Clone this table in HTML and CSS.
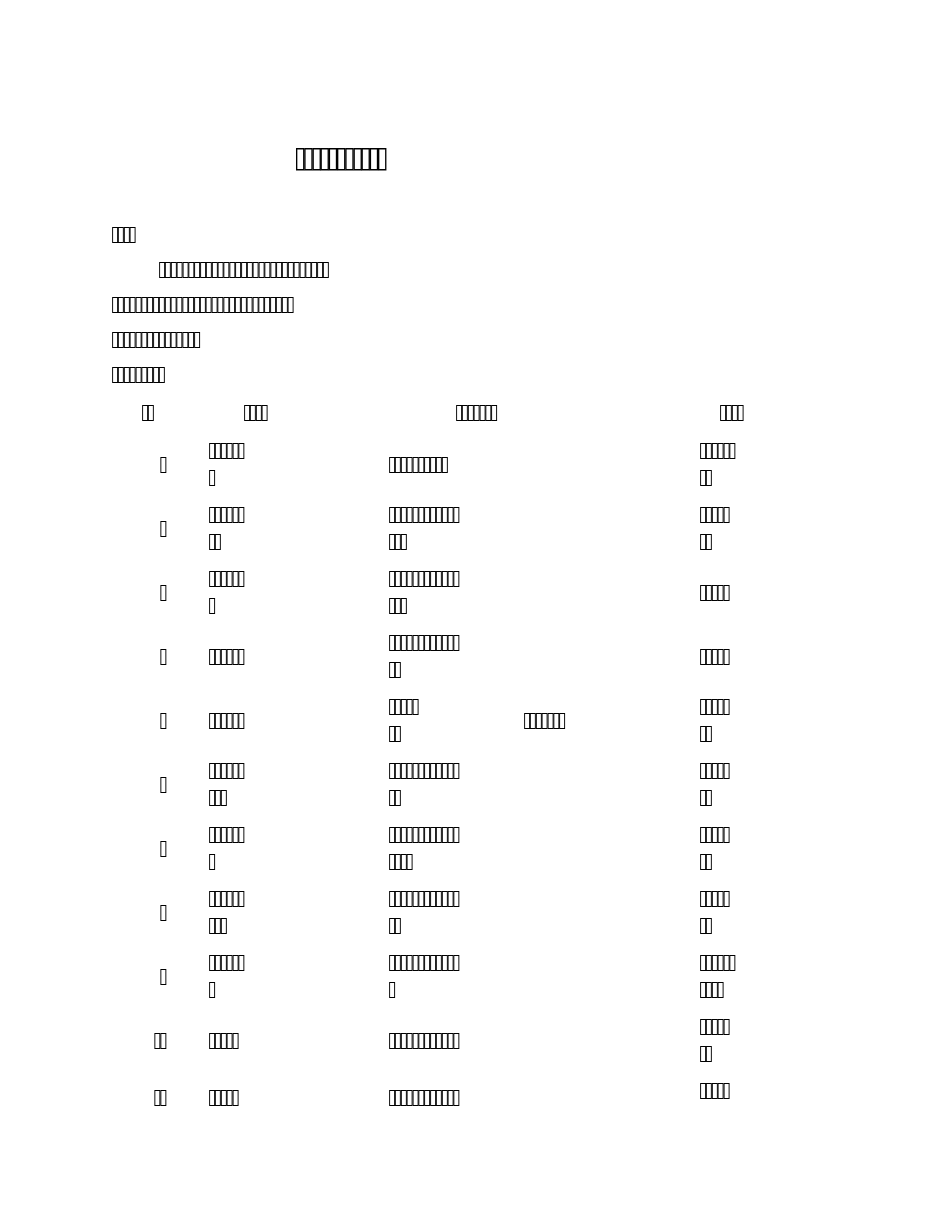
FILE: index.html
```html
<!DOCTYPE html>
<html>
<head>
<meta charset="utf-8">
<title>⌷⌷⌷⌷⌷⌷⌷⌷⌷⌷⌷</title>
<link rel="stylesheet" href="styles.css">
</head>
<body>
<div class="page">
  <h1 class="title">⌷⌷⌷⌷⌷⌷⌷⌷⌷⌷⌷</h1>
  <div class="intro">
    <p class="line">⌷⌷⌷⌷</p>
    <p class="line indent">⌷⌷⌷⌷⌷⌷⌷⌷⌷⌷⌷⌷⌷⌷⌷⌷⌷⌷⌷⌷⌷⌷⌷⌷⌷⌷⌷⌷⌷</p>
    <p class="line">⌷⌷⌷⌷⌷⌷⌷⌷⌷⌷⌷⌷⌷⌷⌷⌷⌷⌷⌷⌷⌷⌷⌷⌷⌷⌷⌷⌷⌷⌷⌷</p>
    <p class="line">⌷⌷⌷⌷⌷⌷⌷⌷⌷⌷⌷⌷⌷⌷⌷</p>
    <p class="line">⌷⌷⌷⌷⌷⌷⌷⌷⌷</p>
  </div>
  <div class="table">
    <div class="thead">
      <div class="th th-no">⌷⌷</div>
      <div class="th">⌷⌷⌷⌷</div>
      <div class="th">⌷⌷⌷⌷⌷⌷⌷</div>
      <div class="th">⌷⌷⌷⌷</div>
    </div>

    <div class="row">
      <div class="no">⌷</div>
      <div class="cell">⌷⌷⌷⌷⌷⌷<br>⌷</div>
      <div class="cell">⌷⌷⌷⌷⌷⌷⌷⌷⌷⌷</div>
      <div class="cell"></div>
      <div class="cell">⌷⌷⌷⌷⌷⌷<br>⌷⌷</div>
    </div>
    <div class="row">
      <div class="no">⌷</div>
      <div class="cell">⌷⌷⌷⌷⌷⌷<br>⌷⌷</div>
      <div class="cell">⌷⌷⌷⌷⌷⌷⌷⌷⌷⌷⌷⌷<br>⌷⌷⌷</div>
      <div class="cell"></div>
      <div class="cell">⌷⌷⌷⌷⌷<br>⌷⌷</div>
    </div>
    <div class="row">
      <div class="no">⌷</div>
      <div class="cell">⌷⌷⌷⌷⌷⌷<br>⌷</div>
      <div class="cell">⌷⌷⌷⌷⌷⌷⌷⌷⌷⌷⌷⌷<br>⌷⌷⌷</div>
      <div class="cell"></div>
      <div class="cell">⌷⌷⌷⌷⌷</div>
    </div>
    <div class="row">
      <div class="no">⌷</div>
      <div class="cell">⌷⌷⌷⌷⌷⌷</div>
      <div class="cell">⌷⌷⌷⌷⌷⌷⌷⌷⌷⌷⌷⌷<br>⌷⌷</div>
      <div class="cell"></div>
      <div class="cell">⌷⌷⌷⌷⌷</div>
    </div>
    <div class="row">
      <div class="no">⌷</div>
      <div class="cell">⌷⌷⌷⌷⌷⌷</div>
      <div class="cell">⌷⌷⌷⌷⌷<br>⌷⌷</div>
      <div class="cell">⌷⌷⌷⌷⌷⌷⌷</div>
      <div class="cell">⌷⌷⌷⌷⌷<br>⌷⌷</div>
    </div>
    <div class="row">
      <div class="no">⌷</div>
      <div class="cell">⌷⌷⌷⌷⌷⌷<br>⌷⌷⌷</div>
      <div class="cell">⌷⌷⌷⌷⌷⌷⌷⌷⌷⌷⌷⌷<br>⌷⌷</div>
      <div class="cell"></div>
      <div class="cell">⌷⌷⌷⌷⌷<br>⌷⌷</div>
    </div>
    <div class="row">
      <div class="no">⌷</div>
      <div class="cell">⌷⌷⌷⌷⌷⌷<br>⌷</div>
      <div class="cell">⌷⌷⌷⌷⌷⌷⌷⌷⌷⌷⌷⌷<br>⌷⌷⌷⌷</div>
      <div class="cell"></div>
      <div class="cell">⌷⌷⌷⌷⌷<br>⌷⌷</div>
    </div>
    <div class="row">
      <div class="no">⌷</div>
      <div class="cell">⌷⌷⌷⌷⌷⌷<br>⌷⌷⌷</div>
      <div class="cell">⌷⌷⌷⌷⌷⌷⌷⌷⌷⌷⌷⌷<br>⌷⌷</div>
      <div class="cell"></div>
      <div class="cell">⌷⌷⌷⌷⌷<br>⌷⌷</div>
    </div>
    <div class="row">
      <div class="no">⌷</div>
      <div class="cell">⌷⌷⌷⌷⌷⌷<br>⌷</div>
      <div class="cell">⌷⌷⌷⌷⌷⌷⌷⌷⌷⌷⌷⌷<br>⌷</div>
      <div class="cell"></div>
      <div class="cell">⌷⌷⌷⌷⌷⌷<br>⌷⌷⌷⌷</div>
    </div>
    <div class="row">
      <div class="no">⌷⌷</div>
      <div class="cell">⌷⌷⌷⌷⌷</div>
      <div class="cell">⌷⌷⌷⌷⌷⌷⌷⌷⌷⌷⌷⌷</div>
      <div class="cell"></div>
      <div class="cell">⌷⌷⌷⌷⌷<br>⌷⌷</div>
    </div>
    <div class="row row-last">
      <div class="no">⌷⌷</div>
      <div class="cell">⌷⌷⌷⌷⌷</div>
      <div class="cell">⌷⌷⌷⌷⌷⌷⌷⌷⌷⌷⌷⌷</div>
      <div class="cell"></div>
      <div class="cell cell-top">⌷⌷⌷⌷⌷</div>
    </div>
  </div>
</div>
</body>
</html>
```
FILE: styles.css
```css
html, body {
  margin: 0;
  padding: 0;
  background: #ffffff;
}

body {
  font-family: "DejaVu Sans Mono", monospace;
  font-size: 17px;
  letter-spacing: -4.385px;
  color: #000000;
}

.page {
  width: 950px;
  padding: 140px 0 0 110px;
  box-sizing: border-box;
  will-change: transform;
}

.title {
  margin: 0 0 37px 183px;
  font-size: 24px;
  font-weight: normal;
  letter-spacing: -6.25px;
  line-height: 41px;
}

.intro {
  display: flex;
  flex-direction: column;
}

.line {
  margin: 0;
  line-height: 35px;
  white-space: nowrap;
}

.indent {
  padding-left: 47px;
}

.thead {
  display: grid;
  grid-template-columns: 132px 212px 264px 1fr;
  height: 40px;
  align-items: center;
  line-height: 27px;
}

.th-no {
  padding-left: 30px;
}

.row {
  display: grid;
  grid-template-columns: 97px 180px 135px 176px 1fr;
  min-height: 64px;
  align-items: center;
  line-height: 27px;
}

.no {
  text-align: right;
  padding-right: 43px;
}

.cell {
  white-space: nowrap;
}

.row-last {
  min-height: 50px;
  height: 50px;
}

.cell-top {
  align-self: start;
  padding-top: 5px;
}
```
